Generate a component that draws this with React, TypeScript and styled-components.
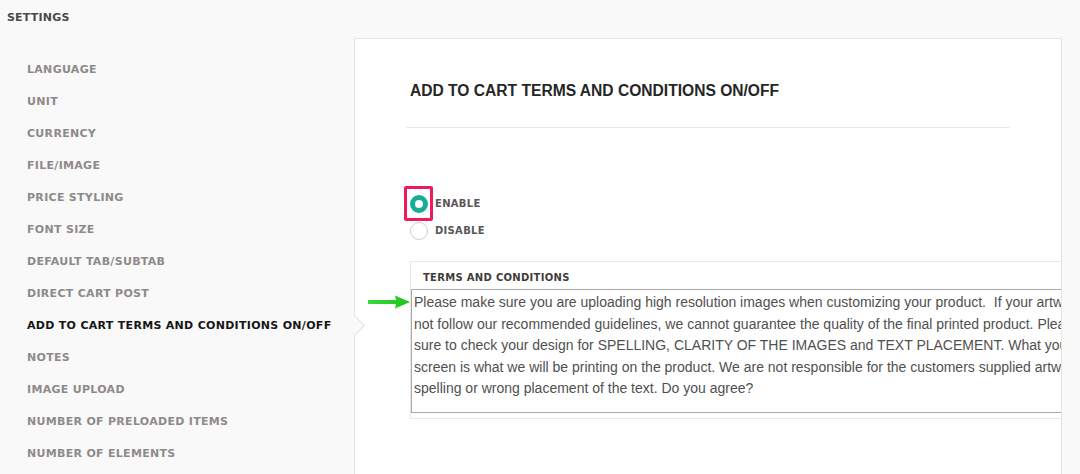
import styled, { createGlobalStyle } from 'styled-components';

const GlobalStyle = createGlobalStyle`
    html, body {
        margin: 0;
        padding: 0;
        overflow: hidden;
        background: #f9f9f9;
    }
`;

const Page = styled.div`
    width: 1080px;
    height: 474px;
    display: flex;
    flex-direction: column;
    overflow: hidden;
    background: #f9f9f9;
    font-family: "DejaVu Sans", sans-serif;
`;

const TopTitle = styled.div`
    flex: 0 0 38px;
    padding: 11px 0 0 7px;
    box-sizing: border-box;
    font-size: 11px;
    line-height: 14px;
    font-weight: 700;
    color: #4a4a4a;
    letter-spacing: 0.2px;
`;

const Body = styled.div`
    display: flex;
    flex: 1 0 auto;
    align-items: flex-start;
`;

const Sidebar = styled.ul`
    position: relative;
    z-index: 2;
    width: 354px;
    flex: 0 0 354px;
    margin: 0;
    padding: 15px 0 0 27px;
    box-sizing: border-box;
    list-style: none;
`;

const NavItem = styled.li<{ $active?: boolean }>`
    position: relative;
    height: 32px;
    display: flex;
    align-items: center;
    font-size: 11px;
    font-weight: 700;
    letter-spacing: 0.3px;
    color: ${(p) => (p.$active ? '#161616' : '#8e8a8a')};

    &::after {
        content: '';
        display: ${(p) => (p.$active ? 'block' : 'none')};
        position: absolute;
        left: 320px;
        top: 9px;
        width: 14px;
        height: 14px;
        background: #f9f9f9;
        border-top: 1px solid #e2e2e2;
        border-right: 1px solid #e2e2e2;
        transform: rotate(45deg);
    }
`;

const Panel = styled.section`
    position: relative;
    flex: 0 0 708px;
    height: 460px;
    box-sizing: border-box;
    background: #fff;
    border: 1px solid #e4e4e4;
    overflow: hidden;
`;

const PanelHead = styled.div`
    margin: 0 51px;
    padding: 42px 4px 26px;
    border-bottom: 1px solid #e8e8e8;
`;

const Heading = styled.h2`
    margin: 0;
    font-family: "Liberation Sans", Arial, sans-serif;
    font-size: 15.6px;
    line-height: 20px;
    font-weight: 700;
    color: #262626;
`;

const PanelBody = styled.div`
    position: relative;
    padding: 62px 0 0 55px;
`;

const RadioRow = styled.label`
    position: relative;
    height: 27px;
    display: flex;
    align-items: center;
    gap: 7px;
    font-size: 10px;
    font-weight: 700;
    letter-spacing: 0.3px;
    color: #5a5656;
`;

const RadioDot = styled.span<{ $checked?: boolean }>`
    width: 18px;
    height: 18px;
    box-sizing: border-box;
    border-radius: 50%;
    background: #fff;
    border: ${(p) => (p.$checked ? '5px solid #16ac96' : '1px solid #cfcfcf')};
`;

const Highlight = styled.span`
    position: absolute;
    left: -6px;
    top: -4px;
    width: 29px;
    height: 35px;
    box-sizing: border-box;
    border: 3px solid #ee1a5c;
    border-radius: 2px;
`;

const TermsBox = styled.div`
    position: relative;
    margin-top: 17px;
    width: 720px;
    border: 1px solid #e8e8e8;
    padding: 9px 0 5px;
`;

const TermsLabel = styled.div`
    padding-left: 12px;
    margin-bottom: 4px;
    font-size: 10px;
    line-height: 14px;
    font-weight: 700;
    letter-spacing: 0.3px;
    color: #3f3c3c;
`;

const TermsText = styled.div`
    border: 1px solid #a9a9a9;
    padding: 2px 0 12px 2px;
    font-family: "Liberation Sans", Arial, sans-serif;
    font-size: 14px;
    line-height: 21.5px;
    color: #505050;
    white-space: pre;
`;

const Pointer = styled.svg`
    position: absolute;
    left: -44px;
    top: 33px;
`;

const navItems = [
    'LANGUAGE',
    'UNIT',
    'CURRENCY',
    'FILE/IMAGE',
    'PRICE STYLING',
    'FONT SIZE',
    'DEFAULT TAB/SUBTAB',
    'DIRECT CART POST',
    'ADD TO CART TERMS AND CONDITIONS ON/OFF',
    'NOTES',
    'IMAGE UPLOAD',
    'NUMBER OF PRELOADED ITEMS',
    'NUMBER OF ELEMENTS',
];

const termsLines = [
    'Please make sure you are uploading high resolution images when customizing your product.  If your artwork does',
    'not follow our recommended guidelines, we cannot guarantee the quality of the final printed product. Please make',
    'sure to check your design for SPELLING, CLARITY OF THE IMAGES and TEXT PLACEMENT. What you see on the',
    'screen is what we will be printing on the product. We are not responsible for the customers supplied artwork,',
    'spelling or wrong placement of the text. Do you agree?',
];

const App = () => {
    const active = 'ADD TO CART TERMS AND CONDITIONS ON/OFF';

    return (
        <Page>
            <GlobalStyle />
            <TopTitle>SETTINGS</TopTitle>
            <Body>
                <Sidebar>
                    {navItems.map((item) => (
                        <NavItem key={item} $active={item === active}>
                            {item}
                        </NavItem>
                    ))}
                </Sidebar>
                <Panel>
                    <PanelHead>
                        <Heading>ADD TO CART TERMS AND CONDITIONS ON/OFF</Heading>
                    </PanelHead>
                    <PanelBody>
                        <RadioRow>
                            <Highlight />
                            <RadioDot $checked />
                            ENABLE
                        </RadioRow>
                        <RadioRow>
                            <RadioDot />
                            DISABLE
                        </RadioRow>
                        <TermsBox>
                            <Pointer width="44" height="14" viewBox="0 0 44 14">
                                <defs>
                                    <linearGradient id="arrowFill" x1="0" y1="0" x2="1" y2="0">
                                        <stop offset="0" stopColor="#3ad83a" />
                                        <stop offset="1" stopColor="#1cc41c" />
                                    </linearGradient>
                                </defs>
                                <path d="M1 5 L29 5 L28 0.5 L43 7 L28 13.5 L29 9 L1 9 Z" fill="url(#arrowFill)" />
                            </Pointer>
                            <TermsLabel>TERMS AND CONDITIONS</TermsLabel>
                            <TermsText>
                                {termsLines.join('\n')}
                            </TermsText>
                        </TermsBox>
                    </PanelBody>
                </Panel>
            </Body>
        </Page>
    );
};

export default App;
